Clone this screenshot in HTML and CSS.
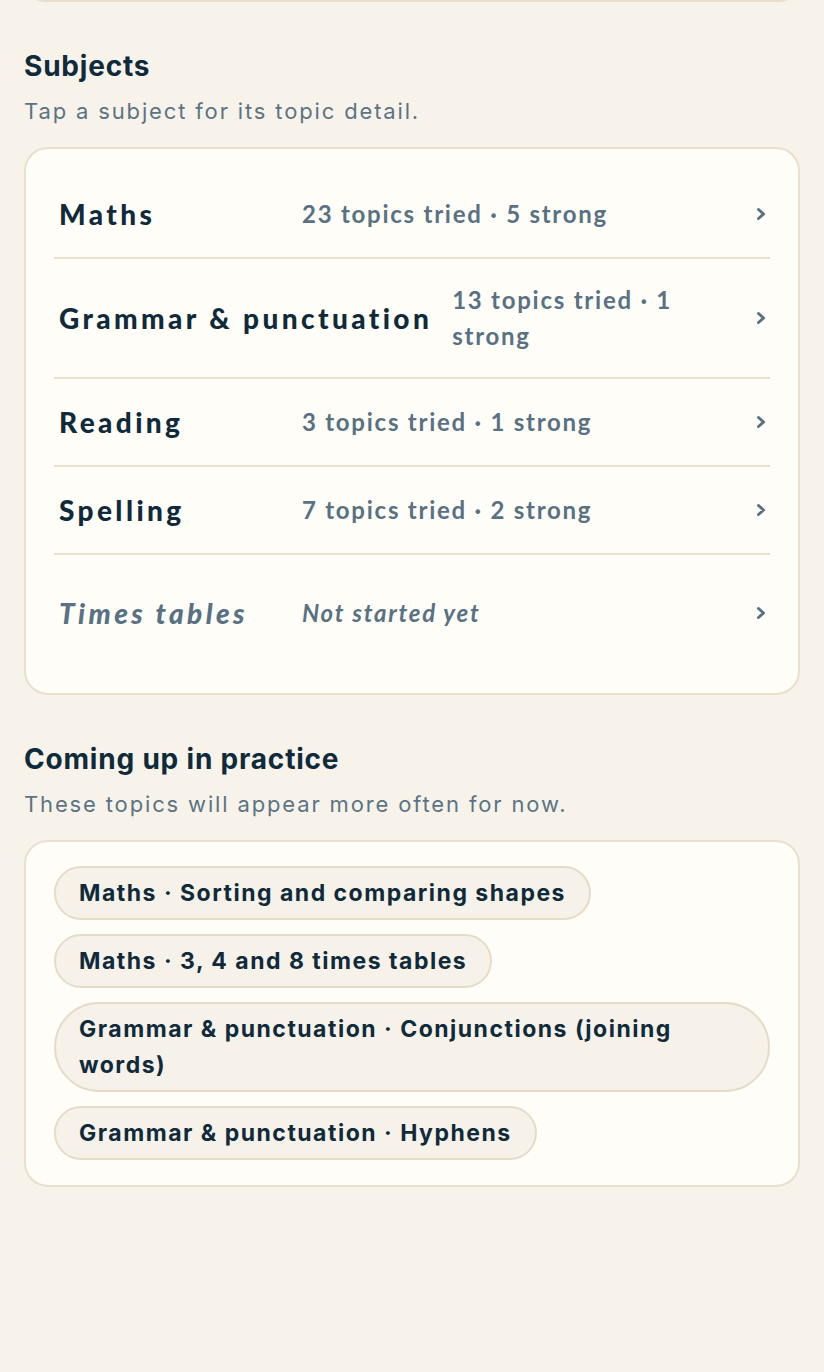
FILE: index.html
```html
<!DOCTYPE html>
<html lang="en">
<head>
<meta charset="utf-8">
<title>Subjects</title>
<link rel="stylesheet" href="styles.css">
</head>
<body>
<div class="page">
  <div class="prev-card"></div>

  <section class="section">
    <h2 class="section-title">Subjects</h2>
    <p class="section-sub">Tap a subject for its topic detail.</p>
    <div class="card subjects">
      <a class="row" href="#">
        <span class="name">Maths</span>
        <span class="stat">23 topics tried · 5 strong</span>
        <svg class="chev" width="10" height="14" viewBox="0 0 10 14"><path d="M2.5 2.5 L7.5 7 L2.5 11.5" fill="none" stroke="currentColor" stroke-width="3" stroke-linecap="round" stroke-linejoin="round"/></svg>
      </a>
      <a class="row" href="#">
        <span class="name">Grammar &amp; punctuation</span>
        <span class="stat">13 topics tried · 1 strong</span>
        <svg class="chev" width="10" height="14" viewBox="0 0 10 14"><path d="M2.5 2.5 L7.5 7 L2.5 11.5" fill="none" stroke="currentColor" stroke-width="3" stroke-linecap="round" stroke-linejoin="round"/></svg>
      </a>
      <a class="row" href="#">
        <span class="name">Reading</span>
        <span class="stat">3 topics tried · 1 strong</span>
        <svg class="chev" width="10" height="14" viewBox="0 0 10 14"><path d="M2.5 2.5 L7.5 7 L2.5 11.5" fill="none" stroke="currentColor" stroke-width="3" stroke-linecap="round" stroke-linejoin="round"/></svg>
      </a>
      <a class="row" href="#">
        <span class="name">Spelling</span>
        <span class="stat">7 topics tried · 2 strong</span>
        <svg class="chev" width="10" height="14" viewBox="0 0 10 14"><path d="M2.5 2.5 L7.5 7 L2.5 11.5" fill="none" stroke="currentColor" stroke-width="3" stroke-linecap="round" stroke-linejoin="round"/></svg>
      </a>
      <a class="row row-empty" href="#">
        <span class="name">Times tables</span>
        <span class="stat">Not started yet</span>
        <svg class="chev" width="10" height="14" viewBox="0 0 10 14"><path d="M2.5 2.5 L7.5 7 L2.5 11.5" fill="none" stroke="currentColor" stroke-width="3" stroke-linecap="round" stroke-linejoin="round"/></svg>
      </a>
    </div>
  </section>

  <section class="section">
    <h2 class="section-title">Coming up in practice</h2>
    <p class="section-sub">These topics will appear more often for now.</p>
    <div class="card chips">
      <span class="chip">Maths · Sorting and comparing shapes</span>
      <span class="chip">Maths · 3, 4 and 8 times tables</span>
      <span class="chip">Grammar &amp; punctuation · Conjunctions (joining words)</span>
      <span class="chip">Grammar &amp; punctuation · Hyphens</span>
    </div>
  </section>
</div>
</body>
</html>
```

FILE: styles.css
```css
* { box-sizing: border-box; }

html, body {
  margin: 0;
  padding: 0;
  background: #f7f3ea;
}

body {
  font-family: Inter, "Noto Sans", sans-serif;
  color: #0f2a3a;
}

.page {
  padding: 0 24px 40px;
}

.prev-card {
  height: 42px;
  margin-top: -40px;
  border: 2px solid #e8dfcd;
  border-radius: 24px;
  background: #fffdf8;
}

.section-title {
  margin: 46px 0 0;
  font-size: 28px;
  line-height: 36px;
  font-weight: 700;
  letter-spacing: 0.8px;
  color: #0f2a3a;
}

.section-sub {
  margin: 11px 0 0;
  font-size: 22px;
  line-height: 32px;
  font-weight: 400;
  letter-spacing: 1.85px;
  color: #5c7384;
}

.card {
  margin-top: 20px;
  background: #fffdf8;
  border: 2px solid #e8dfcd;
  border-radius: 24px;
}

.subjects {
  padding: 22px 28px;
}

.row {
  display: flex;
  align-items: center;
  gap: 20px;
  min-height: 88px;
  padding: 23px 4px 23px 5px;
  border-bottom: 2px solid #e8dfcd;
  text-decoration: none;
  color: inherit;
}

.row-empty {
  border-bottom: none;
  min-height: 116px;
}

.name {
  flex: none;
  min-width: 223px;
  font-family: Lato, "Noto Sans", sans-serif;
  font-size: 28px;
  line-height: 36px;
  font-weight: 900;
  letter-spacing: 3.4px;
  color: #0f2a3a;
}

.stat {
  flex: 1;
  font-family: Lato, "Noto Sans", sans-serif;
  font-size: 24px;
  line-height: 36px;
  font-weight: 700;
  letter-spacing: 1.75px;
  color: #587183;
}

.row-empty .name,
.row-empty .stat {
  font-style: italic;
  color: #587183;
}

.chev {
  flex: none;
  color: #587183;
}

.chips {
  display: flex;
  flex-direction: column;
  align-items: flex-start;
  gap: 14px;
  padding: 24px 28px 25px;
}

.chip {
  display: inline-block;
  padding: 7px 23px;
  background: #f7f2e9;
  border: 2px solid #e6dbc7;
  border-radius: 999px;
  font-size: 23px;
  line-height: 36px;
  font-weight: 700;
  letter-spacing: 1.5px;
  color: #0f2a3a;
}
```
